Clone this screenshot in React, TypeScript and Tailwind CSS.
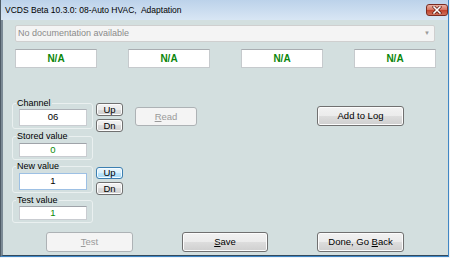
import type { ReactNode } from 'react';

// Win7 style push button
function Btn({
  children,
  className = '',
  kind = 'normal',
}: {
  children: ReactNode;
  className?: string;
  kind?: 'normal' | 'disabled' | 'hot';
}) {
  const look =
    kind === 'disabled'
      ? 'border-[#adb2b5] bg-[#f4f4f4] text-[#9a9a9a]'
      : kind === 'hot'
        ? 'border-[#3c7fb1] bg-[linear-gradient(#eaf6fd,#d9f0fc_50%,#bee6fd_50%,#a7d9f5)] shadow-[inset_0_0_0_1px_#f4fbff]'
        : 'border-[#707070] bg-[linear-gradient(#f2f2f2,#ebebeb_50%,#dddddd_50%,#cfcfcf)] shadow-[inset_0_0_0_1px_#fcfcfc]';
  return (
    <div
      className={`flex items-center justify-center border rounded-[3px] text-[9.5px] leading-none ${look} ${className}`}
    >
      {children}
    </div>
  );
}

// group box with caption on the frame
function Group({ label, children }: { label: string; children: ReactNode }) {
  return (
    <fieldset className="w-[81px] border border-[#eaf0f0] rounded-[3px] pb-[2px]">
      <legend className="ml-[3px] px-[1px] text-[9px] leading-[12px]">{label}</legend>
      {children}
    </fieldset>
  );
}

function CloseButton() {
  return (
    <div className="ml-auto w-[22px] h-[12px] rounded-[3px] border border-[#7a2c22] bg-[linear-gradient(#eab0a2,#d87764_45%,#c2452f_55%,#d0705c)] flex items-center justify-center">
      <svg width="10" height="8" viewBox="0 0 10 8">
        <path d="M2 1 L8 7 M8 1 L2 7" stroke="#5a1a12" strokeWidth="3" strokeLinecap="square" />
        <path d="M2 1 L8 7 M8 1 L2 7" stroke="#ffffff" strokeWidth="1.6" strokeLinecap="square" />
      </svg>
    </div>
  );
}

export default function App() {
  const boxes = ['N/A', 'N/A', 'N/A', 'N/A'];

  return (
    <div className="w-[450px] h-[258px] bg-[#eef2f6] font-['Liberation_Sans',Arial,sans-serif] text-black overflow-hidden">
      <div className="w-[449px] h-[257px] flex flex-col border-l border-l-[#4e5b66] border-r border-r-[#3f86c4] border-b border-b-[#3f86c4]">
        {/* タイトルバー */}
        <div className="h-[20px] shrink-0 flex items-center bg-[linear-gradient(#bcd2ea,#d8e6f4)] pl-[4px]">
          <span className="text-[8.5px] leading-none whitespace-pre">VCDS Beta 10.3.0: 08-Auto HVAC,  Adaptation</span>
          <CloseButton />
        </div>

        {/* クライアント領域 */}
        <div className="flex-1 flex flex-col bg-[#d3dfdf] border-l-2 border-l-[#7b8a95] border-b border-b-[#31495d]">
          {/* documentation combo */}
          <div className="ml-[12px] mt-[5px] w-[420px] h-[17px] bg-[#f4f4f4] border border-[#cfcfcf] rounded-[2px] flex items-center pl-[2px] pr-[4px]">
            <span className="text-[9px] text-[#8a8a8a]">No documentation available</span>
            <span className="ml-auto text-[6px] text-[#9a9a9a]">▼</span>
          </div>

          {/* measuring value boxes */}
          <div className="ml-[12px] mt-[7px] flex gap-[31px]">
            {boxes.map((b, i) => (
              <div
                key={i}
                className="w-[82px] h-[19px] bg-white border border-[#c6cacd] border-t-[#a9adb1] flex items-center justify-center text-[10px] font-bold text-[#0a860a]"
              >
                {b}
              </div>
            ))}
          </div>

          {/* channel area */}
          <div className="mt-[29px] ml-[9px] flex items-start">
            <div className="flex flex-col">
              <Group label="Channel">
                <div className="ml-[6px] w-[68px] h-[17px] bg-white border border-[#c9ccd1] border-t-[#aeb2b8] flex items-center justify-center text-[9.5px]">
                  06
                </div>
              </Group>
              <div className="mt-[1px]">
                <Group label="Stored value">
                  <div className="ml-[6px] mt-[1px] w-[68px] h-[14px] bg-white border border-[#c9ccd1] border-t-[#9fa3a9] flex items-center justify-center text-[9.5px] text-[#0a8a0a]">
                    0
                  </div>
                </Group>
              </div>
              <Group label="New value">
                <div className="ml-[6px] mt-[1px] w-[68px] h-[17px] bg-white border border-[#9dc0e4] flex items-center justify-center text-[9.5px]">
                  1
                </div>
              </Group>
              <div className="mt-[1px]">
                <Group label="Test value">
                  <div className="ml-[6px] w-[68px] h-[14px] bg-white border border-[#c9ccd1] border-t-[#9fa3a9] flex items-center justify-center text-[9.5px] text-[#0a8a0a]">
                    1
                  </div>
                </Group>
              </div>
            </div>

            <div className="ml-[3px] flex flex-col">
              <Btn className="mt-[6px] w-[27px] h-[13px]">Up</Btn>
              <Btn className="mt-[3px] w-[27px] h-[13px]">Dn</Btn>
              <Btn kind="hot" className="mt-[35px] w-[27px] h-[12px]">Up</Btn>
              <Btn className="mt-[3px] w-[27px] h-[13px]">Dn</Btn>
            </div>

            <Btn kind="disabled" className="ml-[12px] mt-[10px] w-[62px] h-[19px]">
              <span>
                <span className="underline">R</span>ead
              </span>
            </Btn>

            <Btn className="ml-[120px] mt-[9px] w-[87px] h-[20px]">Add to Log</Btn>
          </div>

          {/* bottom buttons */}
          <div className="mt-[9px] ml-[43px] flex gap-[49px]">
            <Btn kind="disabled" className="w-[87px] h-[20px]">
              <span>
                <span className="underline">T</span>est
              </span>
            </Btn>
            <Btn className="w-[86px] h-[20px]">
              <span>
                <span className="underline">S</span>ave
              </span>
            </Btn>
            <Btn className="w-[87px] h-[20px]">
              <span>
                Done, Go <span className="underline">B</span>ack
              </span>
            </Btn>
          </div>
        </div>
      </div>
    </div>
  );
}
